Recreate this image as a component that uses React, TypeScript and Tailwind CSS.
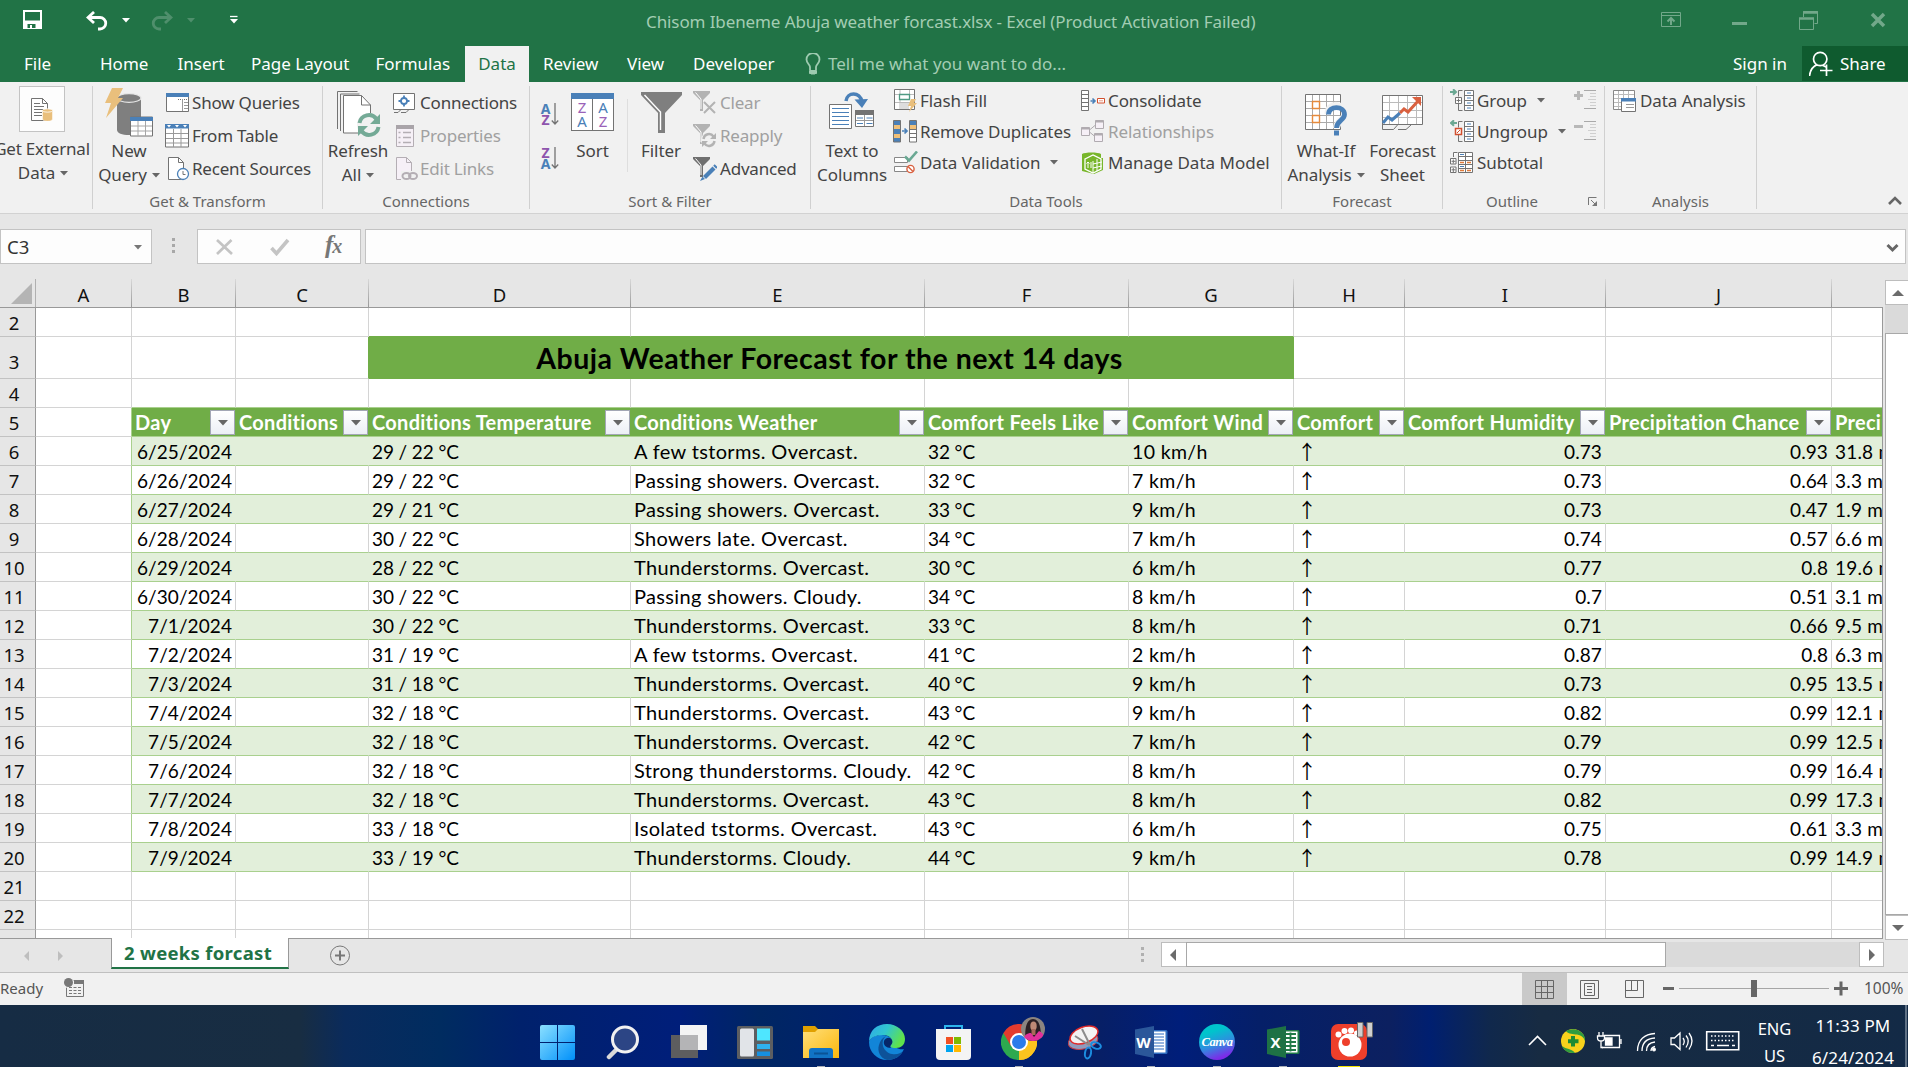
import type { ReactNode } from "react";

type Kids = { children?: ReactNode };

/** Icon whose drawing coordinates are window coordinates. */
function Ico({ x, y, w, h, className = "", children }: { x: number; y: number; w: number; h: number; className?: string } & Kids) {
  return (
    <svg width={w} height={h} viewBox={`${x} ${y} ${w} ${h}`} className={`block flex-none ${className}`} fill="none">
      {children}
    </svg>
  );
}

function Caret({ className = "" }: { className?: string }) {
  return (
    <svg width="8" height="5" viewBox="0 0 8 5" className={`block flex-none ${className}`}>
      <path d="M0 0h8L4 4.6z" fill="currentColor" />
    </svg>
  );
}

/* ------------------------------------------------------------------ title */

function TitleBar() {
  return (
    <div className="flex h-[46px] flex-none items-start text-white">
      <Ico x={23} y={10} w={19} h={19} className="ml-[23px] mt-[10px]">
        <path d="M24 11h17v17H24z" stroke="#fff" strokeWidth="2" />
        <path d="M24 20.5h17v8H24z" fill="#fff" />
        <path d="M27.5 24h8v4h-8z" fill="#217346" />
        <path d="M30 25h2v3h-2z" fill="#fff" />
      </Ico>
      <Ico x={86} y={11} w={22} h={20} className="ml-[44px] mt-[11px]">
        <path d="M94 12l-6 5.500 6 5.500M88.500 17.500h11.500a5.700 5.700 0 0 1 0 11.500h-2" stroke="#fff" strokeWidth="2.800" />
      </Ico>
      <Caret className="ml-[14px] mt-[18px]" />
      <Ico x={151} y={11} w={22} h={20} className="ml-[21px] mt-[11px] text-[#4f8f6c]">
        <path d="M165 12l6 5.500-6 5.500M170.500 17.500H159a5.700 5.700 0 0 0 0 11.500h2" stroke="currentColor" strokeWidth="2.800" />
      </Ico>
      <Caret className="ml-[14px] mt-[18px] text-[#4f8f6c]" />
      <Ico x={230} y={15} w={8} h={9} className="ml-[35px] mt-[15px]">
        <path d="M230 16.500h7.500" stroke="#fff" strokeWidth="1.300" />
        <path d="M230 19h8l-4 4.500z" fill="#fff" />
      </Ico>
      <div className="ml-[408px] mt-[9px] w-[1015px] whitespace-nowrap text-[17px] leading-[26px] tracking-[-0.100px] text-[#a3cdb3]">
        Chisom Ibeneme Abuja weather forcast.xlsx - Excel (Product Activation Failed)
      </div>
      <Ico x={1661} y={12} w={20} h={15} className="mt-[12px] text-[#72a88a]">
        <path d="M1661.500 12.500h19v14h-19zM1661.500 15.500h19" stroke="currentColor" />
        <path d="M1671 25v-6M1667.500 21.500l3.500-3.500 3.500 3.500" stroke="currentColor" strokeWidth="2" />
      </Ico>
      <div className="ml-[51px] mt-[22px] h-[3px] w-[15px] bg-[#72a88a]" />
      <Ico x={1799} y={11} w={19} h={19} className="ml-[52px] mt-[11px] text-[#72a88a]">
        <path d="M1799.500 18.500h14v11h-14zM1803.500 17v-5.500h14v12h-3" stroke="currentColor" />
        <path d="M1799 18.500h15M1803 12.500h15" stroke="currentColor" strokeWidth="2.500" />
      </Ico>
      <Ico x={1870} y={12} w={16} h={16} className="ml-[52px] mt-[12px] text-[#72a88a]">
        <path d="M1872 14l12 12M1884 14l-12 12" stroke="currentColor" strokeWidth="3.500" />
      </Ico>
    </div>
  );
}

function Tab({ className, children }: { className: string } & Kids) {
  return <div className={`flex-none ${className}`}>{children}</div>;
}

function Tabs() {
  return (
    <div className="flex h-[36px] flex-none items-stretch whitespace-nowrap text-[17px] leading-[35px] text-white">
      <Tab className="ml-[24px] w-[76px]">File</Tab>
      <Tab className="w-[77.500px]">Home</Tab>
      <Tab className="w-[73.500px]">Insert</Tab>
      <Tab className="w-[124.500px]">Page Layout</Tab>
      <Tab className="w-[89.500px]">Formulas</Tab>
      <Tab className="w-[64px] bg-[#f1f1f1] text-center text-[#217346]">Data</Tab>
      <Tab className="ml-[14px] w-[84px]">Review</Tab>
      <Tab className="w-[66px]">View</Tab>
      <Tab className="w-[112px]">Developer</Tab>
      <Ico x={805} y={53} w={16} h={23} className="mt-[7px]">
        <path d="M810 70v-3c0-2-3.500-4-3.500-7.500a6.500 6.500 0 0 1 13 0c0 3.500-3.500 5.500-3.500 7.500v3" stroke="#9ecbb0" strokeWidth="1.800" />
        <path d="M809.500 70.500h7v3h-7zM811 74h4" stroke="#9ecbb0" fill="#9ecbb0" strokeWidth="1" />
      </Ico>
      <div className="ml-[7px] w-[905px] text-[#a3cdb3]">Tell me what you want to do...</div>
      <div className="w-[69px]">Sign in</div>
      <div className="flex h-[35px] w-[106px] bg-[#0f5b2f]">
        <Ico x={1809} y={51} w={24} h={26} className="ml-[7px] mt-[5px]">
          <path d="M1813.500 59a6.700 6.700 0 1 1 13.400 0a6.700 6.700 0 0 1-13.400 0zM1809.500 76c.5-6 3-9.500 8-11.500M1823 65.500c1 .5 2 1 3 1.500M1820 70.500h12.500M1826.500 64.500v11.500" stroke="#fff" strokeWidth="1.700" />
        </Ico>
        <span className="ml-[7px]">Share</span>
      </div>
    </div>
  );
}

/* ----------------------------------------------------------------- ribbon */

function Group({ label, className, labelClass = "", children, corner }: { label: string; className: string; labelClass?: string; corner?: ReactNode } & Kids) {
  return (
    <div className={`flex flex-none ${className}`}>
      <div className="flex min-w-0 flex-1 flex-col">
        <div className="flex h-[107px] items-start">{children}</div>
        <div className={`flex h-[24px] justify-center text-[15px] leading-[25px] tracking-normal text-[#666] ${labelClass}`}>
          <span>{label}</span>
          {corner}
        </div>
      </div>
      <div className="mt-[4px] h-[123px] w-px flex-none bg-[#d0d0d0]" />
    </div>
  );
}

function Big({ className, icon, a, b, caret }: { className: string; icon: ReactNode; a: string; b?: string; caret?: boolean }) {
  return (
    <div className={`flex flex-none flex-col items-center ${className}`}>
      <div className="h-[57px]">{icon}</div>
      <div className="h-[24px] leading-[24px]">{a}</div>
      {b && (
        <div className="flex h-[24px] items-center leading-[24px]">
          {b}
          {caret && <Caret className="ml-[5px] text-[#666]" />}
        </div>
      )}
    </div>
  );
}

function Small({ icon, children, dim, caret, row = "h-[33px]" }: { icon: ReactNode; dim?: boolean; caret?: boolean; row?: string } & Kids) {
  return (
    <div className={`flex items-center ${row} ${dim ? "text-[#a0a0a0]" : ""}`}>
      <div className="flex w-[27px] flex-none">{icon}</div>
      <span>{children}</span>
      {caret && <Caret className="ml-[10px] text-[#666]" />}
    </div>
  );
}

const G = "#737373";
const B = "#4a80b8";

function NewQueryIcon() {
  return (
    <Ico x={105} y={87} w={48} h={50} className="mt-[5px]">
      <path d="M117 98v32c0 3 5 5 12 5s12-2 12-5V98z" fill="#7f7f7f" />
      <ellipse cx="129" cy="98" rx="12" ry="4.300" fill="#7f7f7f" stroke="#e6e6e6" strokeWidth="1.200" />
      <path d="M112 88h11l-5 10h5l-17 20 5-15h-6z" fill="#e9bf7c" />
      <path d="M130.500 117h22v19h-22z" fill="#fff" stroke={G} />
      <path d="M130 117h23v4h-23z" fill={B} />
      <path d="M138 121v15M145.500 121v15M131 126h21M131 131h21" stroke="#a6a6a6" />
    </Ico>
  );
}

function RefreshIcon() {
  return (
    <Ico x={338} y={90} w={45} h={47} className="mt-[8px]">
      <path d="M339.500 129V91.500h20M342.500 131V94h19" stroke={G} />
      <path d="M345.500 133V95.500h18l9 9.500v28z" fill="#fff" stroke={G} />
      <path d="M363.500 95.500v9.500h9" stroke={G} />
      <circle cx="371" cy="125" r="12" fill="#f1f1f1" />
      <path d="M361.500 123a9.500 9.500 0 0 1 17-4M380.500 127a9.500 9.500 0 0 1-17 4" stroke="#74aa96" strokeWidth="4" />
      <path d="M382 114v10h-10zM360 136v-10h10z" fill="#74aa96" />
    </Ico>
  );
}

function ShowQueriesIcon() {
  return (
    <Ico x={165} y={92} w={24} h={20} className="ml-px">
      <path d="M165.500 92.500h22v18h-22z" fill="#fff" stroke={G} />
      <path d="M165 92h23v4h-23z" fill={B} />
      <path d="M177 98.500h10" stroke={G} strokeDasharray="1 1" />
      <path d="M181.500 98v12M183 101.500h4M183 104.500h4M183 107.500h4" stroke="#999" />
    </Ico>
  );
}

function FromTableIcon() {
  return (
    <Ico x={165} y={123} w={24} h={24}>
      <path d="M165.500 123.500h23v22.500h-23z" fill="#fff" stroke={G} />
      <path d="M165 123h24v4.500h-24z" fill={B} />
      <path d="M167 124h4l-2 2.500zM175 124h4l-2 2.500zM183 124h4l-2 2.500z" fill="#fff" />
      <path d="M173.500 128v18M181 128v18M166 132.500h22M166 137.500h22M166 142h22" stroke="#999" />
    </Ico>
  );
}

function DocIcon({ kind }: { kind: "clock" | "link" }) {
  const c = kind === "clock" ? G : "#b4aeb4";
  return (
    <Ico x={165} y={157} w={25} h={24} className="ml-[2px]">
      <path d="M166.500 157.500h10l5 5v17h-15z" fill={kind === "clock" ? "#fff" : "#f6f0f7"} stroke={c} />
      <path d="M176.500 157.500v5h5" stroke={c} />
      {kind === "clock" ? (
        <>
          <circle cx="181" cy="174" r="5.500" fill="#fff" stroke={B} strokeWidth="1.300" />
          <path d="M181 171v3.500h2.500" stroke={G} />
        </>
      ) : (
        <>
          <path d="M171 171h18v10h-18z" fill="#f1f1f1" />
          <ellipse cx="176.500" cy="176" rx="4" ry="3" stroke={c} strokeWidth="2" />
          <ellipse cx="183" cy="176" rx="4" ry="3" stroke={c} strokeWidth="2" />
        </>
      )}
    </Ico>
  );
}

function ConnectionsIcon() {
  return (
    <Ico x={394} y={92} w={22} h={20}>
      <path d="M394.500 92.500h21v16h-21z" fill="#fff" stroke={G} />
      <path d="M395 111.500h4l3-3M402 111.500h5l3-3" stroke={G} />
      <circle cx="405" cy="100" r="3" stroke={B} strokeWidth="1.800" />
      <path d="M405 94.500v3M405 102.500v3M399.500 100h3M407.500 100h3" stroke={B} strokeWidth="1.800" />
    </Ico>
  );
}

function PropertiesIcon() {
  return (
    <Ico x={395} y={124} w={20} h={22} className="ml-[2px]">
      <path d="M396.500 124.500h17v21h-17z" fill="#f6f0f7" stroke="#b4aeb4" />
      <path d="M396 124h18v4h-18z" fill="#a9a4a9" />
      <path d="M398.500 131.500h2M398.500 136.500h2M398.500 141.500h2M403 131.500h8M403 136.500h8M403 141.500h8" stroke="#b4aeb4" strokeWidth="1.500" />
    </Ico>
  );
}

function AZ({ top, bottom, topClass, bottomClass }: { top: string; bottom: string; topClass: string; bottomClass: string }) {
  return (
    <div className="flex h-[24px] w-[20px] items-center">
      <div className="flex w-[11px] flex-col text-center text-[14px] font-bold leading-[11px]">
        <span className={topClass}>{top}</span>
        <span className={bottomClass}>{bottom}</span>
      </div>
      <svg width="8" height="23" viewBox="0 0 8 23" className="block flex-none" fill="none">
        <path d="M4 0v21M.8 17.500L4 21l3.200-3.500" stroke={G} strokeWidth="1.300" />
      </svg>
    </div>
  );
}

function SortIcon() {
  return (
    <div className="mt-[11px] flex h-[38px] w-[43px] flex-col border border-[#737373] border-t-0 bg-white">
      <div className="-mx-px h-[6px] bg-[#4a80b8]" />
      <div className="flex flex-1 text-center text-[15px] leading-[14px]">
        <div className="flex flex-1 flex-col border-r border-[#737373] pt-px">
          <span className="text-[#9a62b8]">Z</span>
          <span className="text-[#4a80b8]">A</span>
        </div>
        <div className="flex flex-1 flex-col pt-px">
          <span className="text-[#4a80b8]">A</span>
          <span className="text-[#9a62b8]">Z</span>
        </div>
      </div>
    </div>
  );
}

function FilterIcon() {
  return (
    <Ico x={641} y={92} w={41} h={42} className="mt-[10px]">
      <path d="M641 92h41v3l-17 18v20h-7v-20l-17-18z" fill="#7f7f7f" />
      <path d="M644.500 95l16 17v18" stroke="#fff" strokeWidth="1.400" />
    </Ico>
  );
}

function MiniFilter({ kind }: { kind: "clear" | "reapply" | "adv" }) {
  const c = kind === "adv" ? "#6f6f6f" : "#b3b3b3";
  return (
    <Ico x={694} y={157} w={24} h={24}>
      <path d="M694 157h17v2l-7 7v11h-3v-11l-7-7z" fill={c} />
      <path d="M696.500 158.500l5.500 6.500v10" stroke="#fff" strokeWidth="1" />
      {kind === "clear" && <path d="M705 168l11 11M716 168l-11 11" stroke={c} strokeWidth="2" />}
      {kind === "reapply" && (
        <>
          <circle cx="710" cy="173" r="8" fill="#f1f1f1" />
          <path d="M704.500 172a5.500 5.500 0 0 1 10-2.500M715.500 174a5.500 5.500 0 0 1-10 2.500" stroke={c} strokeWidth="2.400" />
          <path d="M717 166v6h-6zM703 180v-6h6z" fill={c} />
        </>
      )}
      {kind === "adv" && (
        <>
          <path d="M704 176l9.500-9.500 3 3-9.500 9.500z" fill={B} />
          <path d="M714.200 165.800l1.500-1.500 3 3-1.500 1.500zM701 181l2.500-4.500 2.500 2.500z" fill={B} />
        </>
      )}
    </Ico>
  );
}

function TextToColumnsIcon() {
  return (
    <Ico x={829} y={91} w={46} h={39} className="mt-[9px]">
      <path d="M829.500 104.500h22v24h-22z" fill="#fff" stroke={G} />
      <path d="M832 108.500h17M832 112.500h17M832 116.500h17M832 120.500h17M832 124.500h17" stroke={B} strokeWidth="1.200" />
      <path d="M846 101c1-9 14-10 16 1" stroke={B} strokeWidth="3.500" />
      <path d="M854.500 99.500l7.500 8.500 6-9z" fill={B} />
      <path d="M855.500 110.500h18v16h-18z" fill="#fff" stroke={G} />
      <path d="M855 110h19v5h-19z" fill={G} />
      <path d="M864.500 115v11M856 120.500h17" stroke="#999" />
      <path d="M857 118h6M866.500 118h6M857 123.500h6M866.500 123.500h6" stroke={B} />
    </Ico>
  );
}

function FlashFillIcon() {
  return (
    <Ico x={894} y={89} w={24} h={23} className="ml-px">
      <path d="M894.500 89.500h20v20h-20z" fill="#fff" stroke={G} />
      <path d="M900 90v19M909.500 90v5M895 94.500h19M895 102.500h19" stroke="#bbb" />
      <path d="M899.500 94.500h10v5h-10z" fill="#fff" stroke="#4f9a83" strokeWidth="1.300" />
      <path d="M900 103h9v6h-9z" fill="#ddd" />
      <path d="M911 99h5l-2 4h3l-8 9 2-6h-3z" fill="#e9bf7c" />
    </Ico>
  );
}

function RemoveDupIcon() {
  return (
    <Ico x={893} y={120} w={24} h={23}>
      <path d="M893.500 120.500h7v21.500h-7z" fill={B} stroke={G} />
      <path d="M894 125h6v4h-6zM894 134h6v4h-6z" fill="#f0c078" />
      <path d="M902 131h4.500M904.500 128.500l2.500 2.500-2.500 2.500" stroke={B} strokeWidth="1.700" />
      <path d="M909.500 120.500h7v21.500h-7z" fill="#fff" stroke={G} />
      <path d="M910 121h6v4h-6z" fill={B} />
      <path d="M910 125h6v4h-6z" fill="#f0c078" />
      <path d="M910 129.500h6M910 133.500h6M910 137.500h6" stroke={G} />
    </Ico>
  );
}

function ValidationIcon() {
  return (
    <Ico x={893} y={150} w={24} h={23} className="ml-px">
      <path d="M893.500 156.500h13v5h-13zM893.500 165.500h13v5h-13z" fill="#fff" stroke="#888" />
      <path d="M904 155.500l4 4 8-9" stroke="#6aa893" strokeWidth="2.600" />
      <circle cx="909.500" cy="168" r="3.600" fill="#fff" stroke="#d9603f" strokeWidth="1.400" />
      <path d="M907 165.500l5 5" stroke="#d9603f" strokeWidth="1.400" />
    </Ico>
  );
}

function ConsolidateIcon() {
  return (
    <Ico x={1081} y={89} w={24} h={21}>
      <path d="M1081.500 89.500h7v20h-7z" fill="#fff" stroke={G} />
      <path d="M1082 93.500h6M1082 97.500h6M1082 101.500h6M1082 105.500h6" stroke={G} />
      <path d="M1090.500 100h4M1092.500 97.500l2.500 2.500-2.500 2.500" stroke={B} strokeWidth="1.600" />
      <path d="M1097.500 97.500h7v4.500h-7z" fill="#fff" stroke="#d2502f" />
      <path d="M1099 99.800h4" stroke="#e59a84" />
    </Ico>
  );
}

function RelationshipsIcon() {
  return (
    <Ico x={1081} y={120} w={24} h={23}>
      <g stroke="#b0abb0" fill="#f6f0f7">
        <path d="M1089.500 130l6-5M1089.500 132l6 5" />
        <path d="M1081.500 127.500h8v8h-8zM1095.500 120.500h8v8h-8zM1094.500 133.500h8v8h-8z" />
        <path d="M1081.500 128.500h8M1095.500 121.500h8M1094.500 134.500h8" strokeWidth="2" />
      </g>
    </Ico>
  );
}

function ModelIcon() {
  return (
    <Ico x={1082} y={151} w={22} h={22} className="ml-px">
      <path d="M1082 153c3-2 16-2 19 0v4h2v12l-9 4-12-3z" fill="#78b62a" />
      <path d="M1085 158l8-4 8 4v10l-8 4-8-4z" stroke="#fff" strokeWidth="1.300" />
      <path d="M1093 160v12M1093 163l9-2M1093 167l9-2M1097 158v12" stroke="#fff" strokeWidth="1" />
      <path d="M1088 161v6M1086.500 162.500l1.500-1.500 1.500 1.500M1091 161v6" stroke="#fff" strokeWidth="1" />
    </Ico>
  );
}

function WhatIfIcon() {
  return (
    <Ico x={1308} y={94} w={42} h={42} className="mt-[12px]">
      <path d="M1308.500 94.500h35v35h-35z" fill="#fff" stroke={G} />
      <path d="M1315.500 95v34M1322.500 95v34M1329.500 95v34M1336.500 95v34M1309 101.500h34M1309 108.500h34M1309 115.500h34M1309 122.500h34" stroke="#aaa" />
      <path d="M1315.500 101.500h7v7h-7zM1315.500 115.500h7v7h-7z" fill="#fff" stroke="#e58a3c" strokeWidth="1.400" />
      <path d="M1331 114c0-12 17-11 17 0c0 6-8.500 6-8.500 14" stroke="#f1f1f1" strokeWidth="7" />
      <path d="M1331.500 114.500c0-9.500 16-9 16 0c0 6-8 6-8 13.500" stroke={B} strokeWidth="4.800" />
      <path d="M1337 130.500h5v5h-5z" fill={B} />
    </Ico>
  );
}

function ForecastIcon() {
  return (
    <Ico x={1381} y={95} w={42} h={36} className="mt-[13px]">
      <path d="M1381.500 95.500h40v29h-40z" fill="#fff" stroke={G} />
      <path d="M1388.500 96v28M1397.500 96v28M1406.500 96v28M1415.500 96v28M1382 102.500h39M1382 110.500h39M1382 117.500h39" stroke="#bbb" />
      <path d="M1381.500 124v5.500h11l4-4.500M1397 129.500h8l5-4.500" stroke={G} />
      <path d="M1382 123l5-6 4 3 8-7" stroke={B} strokeWidth="3" />
      <path d="M1399 113l4-4 4 3 11-12" stroke="#d9603f" strokeWidth="3" />
      <path d="M1411 97h9v9z" fill="#d9603f" />
    </Ico>
  );
}

function OutlineIcon({ kind }: { kind: "group" | "ungroup" | "sub" }) {
  if (kind === "sub")
    return (
      <Ico x={1450} y={151} w={24} h={22}>
        <path d="M1453.500 156v-4.500h4M1450.500 157.500h5.500v5.500h-5.500zM1450.500 166h5.500v5.500h-5.500z" fill="#fff" stroke={G} />
        <path d="M1451.500 160.300h4M1453.300 158.500v4M1451.500 168.800h4M1453.300 167v4" stroke={G} />
        <path d="M1458.500 151.500h14v20h-14zM1465.500 151.500v20M1458.500 155.500h14M1458.500 159.500h14M1458.500 163.500h14M1458.500 167.500h14" fill="#fff" stroke={G} />
        <path d="M1460 153.500h4M1460 165.500h4" stroke={B} />
        <path d="M1460 161.500h4M1467 161.500h4M1460 169.500h4M1467 169.500h4" stroke="#df7a3a" strokeWidth="1.300" />
      </Ico>
    );
  return (
    <Ico x={1450} y={89} w={24} h={23}>
      {kind === "group" ? (
        <path d="M1450 92h5M1453 89.300l3 2.700-3 2.700" stroke="#6aa893" strokeWidth="2" />
      ) : (
        <path d="M1457 92h-5M1454 89.300l-3 2.700 3 2.700" stroke="#6aa893" strokeWidth="2" />
      )}
      <path d="M1462.500 90.500h-4v6M1458.500 104v6.500h4" stroke={G} />
      <path d="M1455.500 97.500h6v6h-6z" fill="#fff" stroke={kind === "group" ? G : "#d2502f"} strokeWidth={kind === "group" ? 1 : 1.500} />
      {kind === "group" ? <path d="M1456.500 100.500h4M1458.500 98.500v4" stroke={G} /> : <path d="M1457 102l3-3" stroke="#d2502f" />}
      <path d="M1464.500 90.500h9v20h-9zM1464.500 95.500h9M1464.500 100.500h9M1464.500 105.500h9" fill="#fff" stroke={G} />
      <path d="M1467 93h4M1467 98h4M1467 103h4M1467 108h4" stroke={B} />
    </Ico>
  );
}

function DetailIcon({ plus }: { plus?: boolean }) {
  return (
    <Ico x={1574} y={90} w={22} h={20}>
      <path d="M1574 95.500h9" stroke="#b8b8b8" strokeWidth="3" />
      {plus && <path d="M1578.500 91v9" stroke="#b8b8b8" strokeWidth="3" />}
      <path d="M1584 90.500h12M1584 108.500h12" stroke="#a9a9a9" />
      <path d="M1590 93.500h6M1590 96.500h6M1588 99.500h8M1590 102.500h6M1590 105.500h6" stroke="#cfcfcf" />
    </Ico>
  );
}

function DataAnalysisIcon() {
  return (
    <Ico x={1613} y={90} w={24} h={22}>
      <path d="M1613.500 90.500h21v19h-21z" fill="#fff" stroke="#888" />
      <path d="M1618.500 91v18M1623.500 91v18M1628.500 91v18M1614 94.500h20M1614 98.500h20M1614 102.500h20M1614 106.500h20" stroke="#bbb" />
      <path d="M1621.500 98.500h14v13h-14z" fill="#fff" stroke={G} />
      <path d="M1621 98h15v3.500h-15z" fill={B} />
      <path d="M1626 104.500h8M1626 107.500h8" stroke="#999" />
    </Ico>
  );
}

function Ribbon() {
  return (
    <div className="flex h-[132px] flex-none overflow-hidden whitespace-nowrap border-b border-[#d2d2d2] bg-[#f1f1f1] text-[17px] tracking-[-0.080px] text-[#444]">
      <Group label="" className="w-[93px]">
        <div className="flex w-full flex-col items-center">
          <div className="mr-[8px] mt-[4px] flex h-[46px] w-[46px] flex-none items-center justify-center border border-[#c3c3c3] bg-[#fdfdfd]">
            <Ico x={34} y={98} w={22} h={23}>
              <path d="M34.500 98.500h11l5 5v17h-16z" fill="#fff" stroke={G} />
              <path d="M45.500 98.500v5h5M37 103.500h6M37 106.500h10M37 109.500h10M37 112.500h8M37 115.500h8" stroke={G} />
              <path d="M45.500 110h10v9c0 3-10 3-10 0z" fill="#e9bf7c" stroke="#fff" strokeWidth=".5" />
              <ellipse cx="50.500" cy="110.500" rx="5" ry="1.700" fill="#e9bf7c" stroke="#fff" strokeWidth=".8" />
            </Ico>
          </div>
          <div className="mr-[8px] mt-[5px] h-[24px] leading-[24px] tracking-[-0.200px]">Get External</div>
          <div className="mr-[6px] flex h-[24px] items-center leading-[24px]">
            Data
            <Caret className="ml-[5px] text-[#666]" />
          </div>
        </div>
      </Group>

      <Group label="Get & Transform" className="w-[230px]">
        <Big className="w-[72px]" icon={<NewQueryIcon />} a="New" b="Query" caret />
        <div className="pt-[4px] tracking-[-0.200px]">
          <Small icon={<ShowQueriesIcon />}>Show Queries</Small>
          <Small icon={<FromTableIcon />}>From Table</Small>
          <Small icon={<DocIcon kind="clock" />}>Recent Sources</Small>
        </div>
      </Group>

      <Group label="Connections" className="w-[207px]">
        <Big className="w-[70px]" icon={<RefreshIcon />} a="Refresh" b="All" caret />
        <div className="pt-[4px] tracking-[-0.200px]">
          <Small icon={<ConnectionsIcon />}>Connections</Small>
          <Small dim icon={<PropertiesIcon />}>Properties</Small>
          <Small dim icon={<DocIcon kind="link" />}>Edit Links</Small>
        </div>
      </Group>

      <Group label="Sort & Filter" className="w-[281px]">
        <div className="ml-[10px] flex w-[24px] flex-col gap-[20px] pt-[20px]">
          <AZ top="A" bottom="Z" topClass="text-[#4a80b8]" bottomClass="text-[#8e54ad]" />
          <AZ top="Z" bottom="A" topClass="text-[#8e54ad]" bottomClass="text-[#4a80b8]" />
        </div>
        <Big className="w-[57px]" icon={<SortIcon />} a="Sort" />
        <div className="ml-[6px] mt-[17px] h-[73px] w-px bg-[#dedede]" />
        <Big className="ml-[5px] w-[56px]" icon={<FilterIcon />} a="Filter" />
        <div className="pl-[4px] pt-[4px] tracking-[-0.200px]">
          <Small dim icon={<MiniFilter kind="clear" />}>Clear</Small>
          <Small dim icon={<MiniFilter kind="reapply" />}>Reapply</Small>
          <Small icon={<MiniFilter kind="adv" />}>Advanced</Small>
        </div>
      </Group>

      <Group label="Data Tools" className="w-[471px]">
        <Big className="w-[82px]" icon={<TextToColumnsIcon />} a="Text to" b="Columns" />
        <div className="w-[188px] pt-[3px]">
          <Small row="h-[31px]" icon={<FlashFillIcon />}>Flash Fill</Small>
          <Small row="h-[31px]" icon={<RemoveDupIcon />}>Remove Duplicates</Small>
          <Small row="h-[31px]" icon={<ValidationIcon />} caret>Data Validation</Small>
        </div>
        <div className="pt-[3px]">
          <Small row="h-[31px]" icon={<ConsolidateIcon />}>Consolidate</Small>
          <Small row="h-[31px]" dim icon={<RelationshipsIcon />}>Relationships</Small>
          <Small row="h-[31px]" icon={<ModelIcon />}>
            <span className="tracking-normal">Manage Data Model</span>
          </Small>
        </div>
      </Group>

      <Group label="Forecast" className="w-[161px]">
        <Big className="ml-[4px] w-[80px]" icon={<WhatIfIcon />} a="What-If" b="Analysis" caret />
        <Big className="w-[73px]" icon={<ForecastIcon />} a="Forecast" b="Sheet" />
      </Group>

      <Group
        label="Outline"
        className="w-[162px]"
        labelClass="pl-[43px] !justify-start"
        corner={
          <Ico x={1588} y={197} w={10} h={10} className="ml-[50px] mt-[8px]">
            <path d="M1588.500 205v-7.500h8M1591 200l4 4" stroke="#777" />
            <path d="M1597 201v5h-5z" fill="#777" />
          </Ico>
        }
      >
        <div className="w-[124px] pl-[7px] pt-[3px]">
          <Small row="h-[31px]" icon={<OutlineIcon kind="group" />} caret>Group</Small>
          <Small row="h-[31px]" icon={<OutlineIcon kind="ungroup" />} caret>Ungroup</Small>
          <Small row="h-[31px]" icon={<OutlineIcon kind="sub" />}>Subtotal</Small>
        </div>
        <div className="flex flex-col gap-[11px] pl-[7px] pt-[8px]">
          <DetailIcon plus />
          <DetailIcon />
        </div>
      </Group>

      <Group label="Analysis" className="w-[152px]">
        <div className="pl-[8px] pt-[3px]">
          <Small row="h-[31px]" icon={<DataAnalysisIcon />}>Data Analysis</Small>
        </div>
      </Group>

      <Ico x={1888} y={196} w={14} h={10} className="ml-auto mr-[6px] mt-[114px]">
        <path d="M1889 204l6-6 6 6" stroke="#666" strokeWidth="2.600" />
      </Ico>
    </div>
  );
}

/* ------------------------------------------------------------ formula bar */

function FormulaBar() {
  return (
    <div className="flex h-[65px] flex-none items-start pt-[15px]">
      <div className="flex h-[35px] w-[152px] flex-none items-center justify-between border border-[#c3c3c3] bg-[#fdfdfd] pl-[6px] pr-[9px] pt-px text-[18.500px] text-[#333]">
        C3
        <Caret className="text-[#777]" />
      </div>
      <div className="ml-[20px] mt-[9px] flex flex-col gap-[3px]">
        <i className="h-[3px] w-[3px] bg-[#a8a8a8]" />
        <i className="h-[3px] w-[3px] bg-[#a8a8a8]" />
        <i className="h-[3px] w-[3px] bg-[#a8a8a8]" />
      </div>
      <div className="ml-[22px] flex h-[35px] w-[164px] flex-none items-start border border-[#c3c3c3] bg-[#fdfdfd]">
        <Ico x={215} y={237} w={19} h={18} className="ml-[17px] mt-[8px]">
          <path d="M217 239l15 14M231.500 239L217 253" stroke="#c4c4c4" strokeWidth="2.700" />
        </Ico>
        <Ico x={269} y={237} w={20} h={18} className="ml-[36px] mt-[8px]">
          <path d="M270.500 247l5 5.500L287 239" stroke="#c4c4c4" strokeWidth="3.600" />
        </Ico>
        <span className="ml-[35px] font-['Liberation_Serif',serif] text-[25px] font-bold italic leading-[29px] tracking-[-1px] text-[#777]">
          f<span className="text-[20px]">x</span>
        </span>
      </div>
      <div className="ml-[4px] flex h-[35px] w-[1541px] flex-none items-start justify-end border border-[#c3c3c3] bg-[#fdfdfd]">
        <Ico x={1886} y={243} w={13} h={10} className="mr-[6px] mt-[13px]">
          <path d="M1887.500 245l5 5 5-5" stroke="#666" strokeWidth="3" />
        </Ico>
      </div>
    </div>
  );
}

/* ------------------------------------------------------------------ sheet */

const W = ["w-[96px]", "w-[104px]", "w-[133px]", "w-[262px]", "w-[294px]", "w-[204px]", "w-[165px]", "w-[111px]", "w-[201px]", "w-[226px]", "w-[50px]"];
const LETTERS = ["A", "B", "C", "D", "E", "F", "G", "H", "I", "J"];
const HEADS = ["Day", "Conditions", "Conditions Temperature", "Conditions Weather", "Comfort Feels Like", "Comfort Wind", "Comfort", "Comfort Humidity", "Precipitation Chance", "Precipitation"];

const DATA: string[][] = [
  ["6/25/2024", "29 / 22 °C", "A few tstorms. Overcast.", "32 °C", "10 km/h", "0.73", "0.93", "31.8 mm"],
  ["6/26/2024", "29 / 22 °C", "Passing showers. Overcast.", "32 °C", "7 km/h", "0.73", "0.64", "3.3 mm"],
  ["6/27/2024", "29 / 21 °C", "Passing showers. Overcast.", "33 °C", "9 km/h", "0.73", "0.47", "1.9 mm"],
  ["6/28/2024", "30 / 22 °C", "Showers late. Overcast.", "34 °C", "7 km/h", "0.74", "0.57", "6.6 mm"],
  ["6/29/2024", "28 / 22 °C", "Thunderstorms. Overcast.", "30 °C", "6 km/h", "0.77", "0.8", "19.6 mm"],
  ["6/30/2024", "30 / 22 °C", "Passing showers. Cloudy.", "34 °C", "8 km/h", "0.7", "0.51", "3.1 mm"],
  ["7/1/2024", "30 / 22 °C", "Thunderstorms. Overcast.", "33 °C", "8 km/h", "0.71", "0.66", "9.5 mm"],
  ["7/2/2024", "31 / 19 °C", "A few tstorms. Overcast.", "41 °C", "2 km/h", "0.87", "0.8", "6.3 mm"],
  ["7/3/2024", "31 / 18 °C", "Thunderstorms. Overcast.", "40 °C", "9 km/h", "0.73", "0.95", "13.5 mm"],
  ["7/4/2024", "32 / 18 °C", "Thunderstorms. Overcast.", "43 °C", "9 km/h", "0.82", "0.99", "12.1 mm"],
  ["7/5/2024", "32 / 18 °C", "Thunderstorms. Overcast.", "42 °C", "7 km/h", "0.79", "0.99", "12.5 mm"],
  ["7/6/2024", "32 / 18 °C", "Strong thunderstorms. Cloudy.", "42 °C", "8 km/h", "0.79", "0.99", "16.4 mm"],
  ["7/7/2024", "32 / 18 °C", "Thunderstorms. Overcast.", "43 °C", "8 km/h", "0.82", "0.99", "17.3 mm"],
  ["7/8/2024", "33 / 18 °C", "Isolated tstorms. Overcast.", "43 °C", "6 km/h", "0.75", "0.61", "3.3 mm"],
  ["7/9/2024", "33 / 19 °C", "Thunderstorms. Cloudy.", "44 °C", "9 km/h", "0.78", "0.99", "14.9 mm"],
];

function SheetRow({ n, h = "h-[29px]", pad = "", children }: { n: string; h?: string; pad?: string } & Kids) {
  return (
    <div className={`flex flex-none ${h}`}>
      <div className={`flex w-[36px] flex-none items-end justify-center border-b border-r border-b-[#c2c2c2] border-r-[#999] bg-[#e6e6e6] pr-[7px] font-['Noto_Sans',sans-serif] text-[18.500px] leading-[26px] text-[#111] ${pad}`}>{n}</div>
      {children}
    </div>
  );
}

function EmptyCells({ line }: { line?: "table" | "title" }) {
  return (
    <>
      {W.map((w, i) => (
        <div
          key={i}
          className={`flex-none border-b border-r border-r-[#d4d4d4] ${w} ${
            line === "table" && i > 0 ? "border-b-[#a9d08e]" : line === "title" && i > 2 && i < 7 ? "border-b-[#70ad47]" : "border-b-[#d4d4d4]"
          } ${i === 10 ? "border-r-0" : ""}`}
        />
      ))}
    </>
  );
}

function FilterButton() {
  return (
    <span className="mt-[2px] flex h-[25px] w-[25px] flex-none items-center justify-center border border-[#a3a7b5] bg-gradient-to-b from-white to-[#eceff5]">
      <svg width="10" height="6" viewBox="0 0 10 6">
        <path d="M0 0h10L5 5.500z" fill="#666" />
      </svg>
    </span>
  );
}

function DataRow({ r, i }: { r: string[]; i: number }) {
  const band = i % 2 === 0;
  const cell = `flex-none overflow-hidden border-b border-r border-b-[#a9d08e] px-[3px] ${band ? "border-r-[#e2efda] bg-[#e2efda]" : "border-r-[#d4d4d4]"}`;
  return (
    <SheetRow n={String(i + 6)}>
      <div className="w-[96px] flex-none border-b border-r border-b-[#d4d4d4] border-r-[#a9d08e]" />
      <div className={`${cell} w-[104px] text-right tracking-[0.080px]`}>{r[0]}</div>
      <div className={`${cell} w-[133px]`} />
      <div className={`${cell} w-[262px] tracking-[-0.100px]`}>{r[1]}</div>
      <div className={`${cell} w-[294px] text-[20px] tracking-[0.350px]`}>{r[2]}</div>
      <div className={`${cell} w-[204px] tracking-[-0.100px]`}>{r[3]}</div>
      <div className={`${cell} w-[165px] text-[19.500px] tracking-[0.350px]`}>{r[4]}</div>
      <div className={`${cell} w-[111px] font-['Noto_Sans_CJK_SC',sans-serif] text-[20px]`}>↑</div>
      <div className={`${cell} w-[201px] text-right tracking-[0.100px]`}>{r[5]}</div>
      <div className={`${cell} w-[226px] text-right tracking-[0.100px]`}>{r[6]}</div>
      <div className={`${cell} w-[50px] border-r-0 !pr-0 tracking-[0.200px]`}>{r[7]}</div>
    </SheetRow>
  );
}

function ArrowTri({ dir }: { dir: "up" | "down" | "left" | "right" }) {
  const d = { up: "M0 9l6-6 6 6z", down: "M0 3l6 6 6-6z", left: "M8 0v12L2 6z", right: "M3 0v12l6-6z" }[dir];
  return (
    <svg width="12" height="12" viewBox="0 0 12 12" className="block">
      <path d={d} fill="#6b6b6b" />
    </svg>
  );
}

function Sheet() {
  return (
    <div className="flex h-[659px] flex-none">
      <div className="flex w-[1883px] flex-none flex-col overflow-hidden">
        <div className="flex h-[29px] flex-none border-b border-[#999] font-['Noto_Sans',sans-serif] text-[18.500px] leading-[31px] text-[#111]">
          <div className="flex w-[36px] flex-none justify-end">
            <Ico x={11} y={283} w={21} h={21} className="mr-[3px] mt-[4px]">
              <path d="M32 283v21H11z" fill="#b4b4b4" />
            </Ico>
            <div className="w-px bg-[#b0b0b0]" />
          </div>
          {LETTERS.map((l, i) => (
            <div key={l} className={`flex flex-none text-center ${W[i]}`}>
              <span className="flex-1">{l}</span>
              <div className="w-px bg-gradient-to-b from-[#d8d8d8] to-[#999]" />
            </div>
          ))}
        </div>
        <div className="flex flex-1 flex-col overflow-hidden whitespace-nowrap border-r border-[#999] bg-white font-['Lato',sans-serif] text-[19px] leading-[29px] text-black">
          <SheetRow n="2">
            <EmptyCells line="title" />
          </SheetRow>
          <SheetRow n="3" h="h-[42px]" pad="pb-[3px]">
            {W.slice(0, 3).map((w, i) => (
              <div key={i} className={`flex-none border-b border-r border-b-[#d4d4d4] ${w} ${i === 2 ? "border-r-[#70ad47]" : "border-r-[#d4d4d4]"}`} />
            ))}
            <div className="w-[925px] flex-none bg-[#70ad47] pr-[4px] text-center text-[28.500px] font-bold leading-[43px] tracking-[0.500px]">Abuja Weather Forecast for the next 14 days</div>
            {W.slice(7).map((w, i) => (
              <div key={i} className={`flex-none border-b border-r border-[#d4d4d4] ${w} ${i === 3 ? "border-r-0" : ""}`} />
            ))}
          </SheetRow>
          <SheetRow n="4">
            <EmptyCells line="table" />
          </SheetRow>
          <SheetRow n="5">
            <div className="w-[96px] flex-none border-b border-r border-b-[#d4d4d4] border-r-[#a9d08e]" />
            {HEADS.map((t, i) => (
              <div key={t} className={`flex flex-none justify-between overflow-hidden border-b border-[#a9d08e] bg-[#70ad47] pl-[3px] pr-px text-[20px] font-bold tracking-[0.280px] text-white ${W[i + 1]}`}>
                {t}
                {i < 9 && <FilterButton />}
              </div>
            ))}
          </SheetRow>
          {DATA.map((r, i) => (
            <DataRow key={i} r={r} i={i} />
          ))}
          <SheetRow n="21">
            <EmptyCells />
          </SheetRow>
          <SheetRow n="22">
            <EmptyCells />
          </SheetRow>
          <SheetRow n="">
            <EmptyCells />
          </SheetRow>
        </div>
      </div>
      <div className="ml-[2px] mt-px flex h-[660px] w-[23px] flex-none flex-col bg-[#dadada]">
        <div className="flex h-[25px] w-[25px] flex-none items-center justify-center border border-[#bdbdbd] bg-white">
          <ArrowTri dir="up" />
        </div>
        <div className="mt-[28px] w-[25px] flex-1 border border-[#a8a8a8] bg-white" />
        <div className="flex h-[25px] w-[25px] flex-none items-center justify-center border border-[#bdbdbd] bg-white">
          <ArrowTri dir="down" />
        </div>
      </div>
    </div>
  );
}

/* ------------------------------------------------------ sheet tabs, status */

function SheetTabs() {
  return (
    <div className="flex h-[35px] flex-none border-b border-[#c0c0c0]">
      <div className="flex w-[111px] flex-none border-t border-[#999] pl-[24px] pt-[12px]">
        <svg width="40" height="10" viewBox="0 0 40 10" className="block">
          <path d="M5 0v10L0 5zM34 0v10l5-5z" fill="#bebebe" />
        </svg>
      </div>
      <div className="h-[31px] w-[178px] flex-none whitespace-nowrap border-x border-b-2 border-x-[#999] border-b-[#217346] bg-white pr-[4px] text-center text-[18.500px] font-bold leading-[30px] tracking-[0.300px] text-[#217346]">2 weeks forcast</div>
      <div className="flex w-[1594px] flex-none border-t border-[#999]">
        <Ico x={329} y={946} w={22} h={22} className="ml-[40px] mt-[6px]">
          <circle cx="340" cy="956.500" r="9.500" stroke="#777" />
          <path d="M335 956.500h10M340 951.500v10" stroke="#777" strokeWidth="2" />
        </Ico>
        <div className="ml-[790px] mt-[8px] flex flex-col gap-[3px]">
          <i className="h-[3px] w-[3px] bg-[#b0b0b0]" />
          <i className="h-[3px] w-[3px] bg-[#b0b0b0]" />
          <i className="h-[3px] w-[3px] bg-[#b0b0b0]" />
        </div>
        <div className="ml-[17px] mt-[3px] flex h-[25px] w-[723px] flex-none bg-[#dadada]">
          <div className="flex w-[25px] items-center justify-center border border-r-0 border-[#bdbdbd] bg-white">
            <ArrowTri dir="left" />
          </div>
          <div className="w-[480px] border border-[#a8a8a8] bg-white" />
          <div className="ml-auto flex w-[25px] items-center justify-center border border-[#bdbdbd] bg-white">
            <ArrowTri dir="right" />
          </div>
        </div>
      </div>
    </div>
  );
}

function StatusBar() {
  return (
    <div className="flex h-[32px] flex-none bg-[#f1f1f1] text-[15px] leading-[31px] text-[#555]">
      <span className="w-[64px]">Ready</span>
      <Ico x={64} y={978} w={20} h={20} className="mt-[5px]">
        <path d="M66.500 980.500h17v16h-17z" stroke="#777" />
        <path d="M74 980h10v4H74z" fill="#777" />
        <circle cx="68.500" cy="982.500" r="5.500" fill="#f1f1f1" />
        <circle cx="68.500" cy="982.500" r="4.500" fill="#777" />
        <path d="M69 987.500h12M69 990.500h12M69 993.500h12" stroke="#777" strokeDasharray="3 1.500" />
      </Ico>
      <div className="ml-[1438px] flex w-[45px] items-center justify-center bg-[#c9c9c9]">
        <Ico x={0} y={0} w={19} h={19}>
          <path d="M.5.5h18v18H.5zM6.500.500v18M12.500.500v18M.5 6.500h18M.5 12.500h18" stroke="#666" />
        </Ico>
      </div>
      <div className="flex w-[45px] items-center justify-center">
        <Ico x={0} y={0} w={19} h={19}>
          <path d="M.5.5h18v18H.5zM4.500 3.500h10v12h-10zM7 6.500h5M7 9.500h5M7 12.500h5" stroke="#666" />
        </Ico>
      </div>
      <div className="flex w-[45px] items-center justify-center">
        <Ico x={0} y={0} w={19} h={18}>
          <path d="M.5.5h18v17H.5zM6.500.500v10M12.500.500v10M.5 10.500h12" stroke="#666" />
        </Ico>
      </div>
      <Ico x={1657} y={973} w={207} h={32}>
        <path d="M1663 988.500h11" stroke="#666" strokeWidth="3" />
        <path d="M1679 988.500h150" stroke="#a6a6a6" />
        <path d="M1751 980h6v17h-6z" fill="#666" />
        <path d="M1834 988.500h14M1841 981.500v14" stroke="#666" strokeWidth="3" />
      </Ico>
      <span className="text-[15.500px]">100%</span>
    </div>
  );
}

/* ---------------------------------------------------------------- taskbar */

function Slot({ on, children }: { on?: string } & Kids) {
  return (
    <div className="flex h-[62px] w-[66px] flex-none flex-col items-center">
      <div className="relative mt-[16px] flex h-[42px] w-[42px] items-center justify-center">{children}</div>
      {on && <i className={`mt-[3px] h-px ${on}`} />}
    </div>
  );
}

function OfficeIcon({ letter, dark, light }: { letter: string; dark: string; light: string }) {
  return (
    <div className="relative">
      <svg width="33" height="32" viewBox="0 0 33 32" className="block">
        <path d="M16 4h15q1.500 0 1.500 1.500v21q0 1.500-1.500 1.500H16z" fill={light} />
        <path d="M17 5.500h13.500v21H17z" fill="#fff" />
        {letter === "W" ? (
          <path d="M19 8h10M19 11h10M19 14h10M19 17h10M19 20h10M19 23h10" stroke={light} strokeWidth="1.200" />
        ) : (
          <path d="M19 8h10M19 12h10M19 16h10M19 20h10M19 24h10M23.500 6.500v19" stroke={light} strokeWidth="1.800" />
        )}
        <path d="M0 3.500L19 0v32L0 28z" fill={dark} />
      </svg>
      <span className="absolute left-0 top-0 w-[18px] text-center font-['Open_Sans',sans-serif] text-[15px] font-bold leading-[32px] text-white">{letter}</span>
    </div>
  );
}

function Taskbar() {
  return (
    <div className="flex h-[62px] flex-none overflow-hidden bg-[linear-gradient(90deg,#162c44_0px,#182d42_300px,#0a2b5c_345px,#002c60_440px,#00216c_520px,#001e7a_680px,#002663_760px,#001f70_880px,#001f74_1000px,#071f66_1100px,#001e7a_1180px,#051f68_1260px,#0c2060_1390px,#001f70_1430px,#10284c_1490px,#172b42_1540px,#132a46_1908px)]">
      <div className="ml-[524px] flex w-[1004px] flex-none">
        <Slot>
          <svg width="35" height="35" viewBox="0 0 35 35">
            <defs>
              <linearGradient id="win" x1="0" y1="0" x2="1" y2="1">
                <stop offset="0" stopColor="#8be0ff" />
                <stop offset="1" stopColor="#0090fa" />
              </linearGradient>
            </defs>
            <path d="M2 0h15v17H0V2q0-2 2-2zM18 0h15q2 0 2 2v15H18zM0 18h17v17H2q-2 0-2-2zM18 18h17v15q0 2-2 2H18z" fill="url(#win)" />
          </svg>
        </Slot>
        <Slot>
          <svg width="34" height="35" viewBox="0 0 34 35" fill="none">
            <path d="M11.500 23.500L3 32" stroke="#d9d9d9" strokeWidth="4.500" strokeLinecap="round" />
            <circle cx="19" cy="14.500" r="12.500" fill="#2c4585" stroke="#f1f1f1" strokeWidth="3" />
          </svg>
        </Slot>
        <Slot>
          <svg width="36" height="34" viewBox="0 0 36 34">
            <path d="M0 10h27v23H0z" fill="#5d5d5f" />
            <path d="M9 0h27v25H9z" fill="#f4f4f4" />
            <path d="M9 10h18v15H9z" fill="#b4b4b6" />
          </svg>
        </Slot>
        <Slot>
          <svg width="36" height="33" viewBox="0 0 36 33">
            <rect width="36" height="33" rx="1.500" fill="#5c5e61" />
            <rect x="3" y="2.500" width="14" height="28" rx="1.500" fill="#e1e4e8" />
            <path d="M20 2.500h13v12H20z" fill="#4ee6ff" />
            <path d="M20 18h13v5H20z" fill="#2fb1ec" />
            <path d="M20 25.500h13v4.500H20z" fill="#1690e0" />
          </svg>
        </Slot>
        <Slot on="w-[8px] bg-[#a8aeb8]">
          <svg width="36" height="33" viewBox="0 0 36 33">
            <defs>
              <linearGradient id="fold" x1="0" y1="0" x2="1" y2="1">
                <stop offset="0" stopColor="#ffdf7a" />
                <stop offset="1" stopColor="#fbb70c" />
              </linearGradient>
            </defs>
            <path d="M0 0h12l3 3v6H0z" fill="#e0a000" />
            <path d="M0 6h12l3-3h21v29H0z" fill="url(#fold)" />
            <path d="M6 32v-7q0-3 3-3h18q3 0 3 3v7z" fill="#1173c5" />
            <path d="M11 27.500h14" stroke="#0a5396" strokeWidth="2" />
          </svg>
        </Slot>
        <Slot>
          <svg width="36" height="36" viewBox="0 0 36 36">
            <defs>
              <linearGradient id="edge" x1="0" y1="0" x2="1" y2=".4">
                <stop offset="0" stopColor="#2fa9ea" />
                <stop offset=".5" stopColor="#30c6cf" />
                <stop offset="1" stopColor="#5fe24c" />
              </linearGradient>
            </defs>
            <path d="M18 36A18 18 0 0 1 0 18c2-8 18-10 24-2 1 2 0 4-1 5 8 6 12 4 12 4-3 7-9 11-17 11z" fill="#1285d8" />
            <path d="M0 18C0 6 8 0 18 0s18 7 18 15c0 6-4 9-9 9-6 0-6-2-5-3 3-4 0-10-8-10C6 11 1 14 0 18z" fill="url(#edge)" />
            <path d="M17 12c-7 6-2 17 6 18 5 1 9-1 11-3-3 5-8 9-16 9-7-2-10-9-8-15 1-4 3-7 7-9z" fill="#0d5299" />
            <path d="M15 17c1-3 6-5 8-1 1 2 0 4-1 5s-1 2 0 3c-5 0-8-3-7-7z" fill="#06276a" />
          </svg>
        </Slot>
        <Slot>
          <svg width="35" height="35" viewBox="0 0 35 35">
            <path d="M9 6V1h17v5" fill="none" stroke="#2cb4ec" strokeWidth="2" />
            <path d="M0 4h35v27q0 4-4 4H4q-4 0-4-4z" fill="#f4f4f4" />
            <path d="M10 12h7v7h-7z" fill="#f25022" />
            <path d="M18 12h7v7h-7z" fill="#7fba00" />
            <path d="M10 20h7v7h-7z" fill="#00a4ef" />
            <path d="M18 20h7v7h-7z" fill="#ffb900" />
          </svg>
        </Slot>
        <Slot on="w-[8px] bg-[#a8aeb8]">
          <svg width="36" height="36" viewBox="0 0 36 36">
            <path d="M18 18L2.400 9A18 18 0 0 1 33.600 9z" fill="#e33b2e" />
            <path d="M18 18L33.600 9A18 18 0 0 1 18 36z" fill="#fcc31e" />
            <path d="M18 18v18A18 18 0 0 1 2.400 9z" fill="#2da94f" />
            <path d="M18 9h15.600L26 22zM2.400 9l7.800 13.500L18 9z" fill="#e33b2e" />
            <path d="M33.600 9H18l7.800 13.500L18 36A18 18 0 0 0 33.600 9z" fill="#fcc31e" />
            <circle cx="18" cy="18" r="9" fill="#fff" />
            <circle cx="18" cy="18" r="7" fill="#2a7bea" />
          </svg>
          <svg width="24" height="24" viewBox="0 0 24 24" className="absolute -top-[4px] left-[23px]">
            <defs>
              <clipPath id="face">
                <circle cx="12" cy="12" r="12" />
              </clipPath>
            </defs>
            <g clipPath="url(#face)">
              <path d="M0 0h24v24H0z" fill="#8c8580" />
              <path d="M5 24C3 14 5 2 12 2s9 12 7 22z" fill="#2c2024" />
              <ellipse cx="12.500" cy="9" rx="3.200" ry="4.500" fill="#c08a76" />
              <path d="M10.500 12h4v6h-4z" fill="#a86a5a" />
              <path d="M2 24c1-6 4-8 8-8l3 4 5-6c4 2 6 5 6 10z" fill="#e0309a" />
            </g>
          </svg>
        </Slot>
        <Slot>
          <svg width="34" height="35" viewBox="0 0 34 35" fill="none">
            <ellipse cx="15" cy="16" rx="15" ry="8" transform="rotate(-12 15 16)" fill="#8f9bbd" stroke="#c8404a" />
            <ellipse cx="16" cy="10" rx="14.500" ry="8" transform="rotate(-20 16 10)" fill="#f3f3f3" stroke="#e02a2a" strokeWidth="1.500" />
            <path d="M14 4l8 16M7 11l14 9" stroke="#8c8c8c" strokeWidth="2" />
            <ellipse cx="28" cy="20.500" rx="5" ry="3" transform="rotate(20 28 20.500)" stroke="#1c8de0" strokeWidth="2" />
            <ellipse cx="20" cy="28" rx="3" ry="5.500" transform="rotate(10 20 28)" stroke="#1c8de0" strokeWidth="2" />
          </svg>
        </Slot>
        <Slot on="w-[8px] bg-[#a8aeb8]">
          <OfficeIcon letter="W" dark="#2b579a" light="#2f6dc0" />
        </Slot>
        <Slot on="w-[8px] bg-[#a8aeb8]">
          <div className="flex h-[36px] w-[36px] items-center justify-center rounded-full bg-[linear-gradient(160deg,#00c4cc_25%,#2f8de0_55%,#7d2ae8_85%)] font-['Liberation_Serif',serif] text-[12.500px] font-bold italic tracking-[-0.5px] text-white">Canva</div>
        </Slot>
        <Slot on="w-[8px] bg-[#a8aeb8]">
          <OfficeIcon letter="X" dark="#1e7145" light="#217a48" />
        </Slot>
        <Slot on="w-[22px] bg-[#f5e400]">
          <svg width="36" height="36" viewBox="0 0 36 36">
            <rect width="36" height="36" rx="7" fill="#ee3f2b" />
            <circle cx="19" cy="21" r="11.500" fill="#fff" />
            <circle cx="15" cy="18" r="4" fill="#ee3f2b" />
            <g fill="#fff">
              <circle cx="7.500" cy="10.500" r="3" />
              <circle cx="13.500" cy="7" r="3" />
              <circle cx="20" cy="6.500" r="3" />
              <circle cx="25.500" cy="9" r="2.500" />
            </g>
          </svg>
          <svg width="17" height="16" viewBox="0 0 17 16" className="absolute left-[29px] top-px">
            <path d="M.5.500h5.500v14.500H.5zM10 .500h5.500v14.500H10z" fill="#cfcfcf" stroke="#666" />
          </svg>
        </Slot>
      </div>
      <Ico x={1528} y={1005} w={220} h={62}>
        <path d="M1529 1045l8.500-8.500 8.500 8.500" stroke="#fff" strokeWidth="1.600" />
        <circle cx="1573" cy="1041" r="12" fill="#f8d21c" />
        <path d="M1566 1031.200c5-3.500 14-2.500 18 4.300 1 2 1 4 1 5.500-1.500-4-4-6-8-6.500-4-.500-8-.500-11-3.300zM1562 1046c4 3.500 10 2.500 13 6.800-6 1-11-2-13-6.800z" fill="#2f9c3f" />
        <path d="M1573 1036v10.500M1568 1041.200h10.500" stroke="#1e8c33" strokeWidth="4" />
        <g stroke="#fff" strokeWidth="1.300">
          <path d="M1604 1035.500h15.500v12H1602M1621 1039v5" />
          <path d="M1599 1032v4M1603 1032v4M1597.500 1036h7v2q0 3-3.500 3t-3.500-3zM1601 1041v6.500h2" />
          <path d="M1605.500 1038h6.500v7h-6.500z" fill="#fff" />
          <path d="M1637.500 1051c0-11 7-17 17.500-17.500M1642 1051c0-8 5-12.500 13-13M1646.500 1051c0-5 3-8.500 8.500-9M1651 1051c0-2.500 1.500-4 4-4.500" />
          <circle cx="1654" cy="1049.500" r="1.300" fill="#fff" />
          <path d="M1671 1038h3.500l5.500-5v16.500l-5.500-5H1671zM1683 1038q2.500 3.500 0 7M1686 1035.500q4.500 5.500 0 12M1689 1033q6 8 0 16.500" />
          <path d="M1706.700 1031.700h32v18h-32z" strokeWidth="1.600" />
          <path d="M1711 1036h24M1711 1040.500h24" strokeDasharray="1.500 2" />
          <path d="M1711 1045.500h3M1717 1045.500h12M1732 1045.500h3" />
        </g>
      </Ico>
      <div className="flex w-[53px] flex-none flex-col items-center whitespace-nowrap text-[16.500px] leading-[27px] text-white">
        <span className="mt-[10px]">ENG</span>
        <span>US</span>
      </div>
      <div className="flex w-[104px] flex-none flex-col items-center whitespace-nowrap text-[17px] tracking-[0.150px] text-white">
        <span className="mt-[5px] leading-[32px]">11:33 PM</span>
        <span className="leading-[32px]">6/24/2024</span>
      </div>
      <div className="w-[2px] bg-[#5f7185]" />
    </div>
  );
}

export default function App() {
  return (
    <div className="flex h-[1067px] w-[1908px] flex-col overflow-hidden bg-[#e6e6e6] font-['Noto_Sans',sans-serif]">
      <div className="flex-none bg-[#217346]">
        <TitleBar />
        <Tabs />
      </div>
      <Ribbon />
      <FormulaBar />
      <Sheet />
      <SheetTabs />
      <StatusBar />
      <Taskbar />
    </div>
  );
}
